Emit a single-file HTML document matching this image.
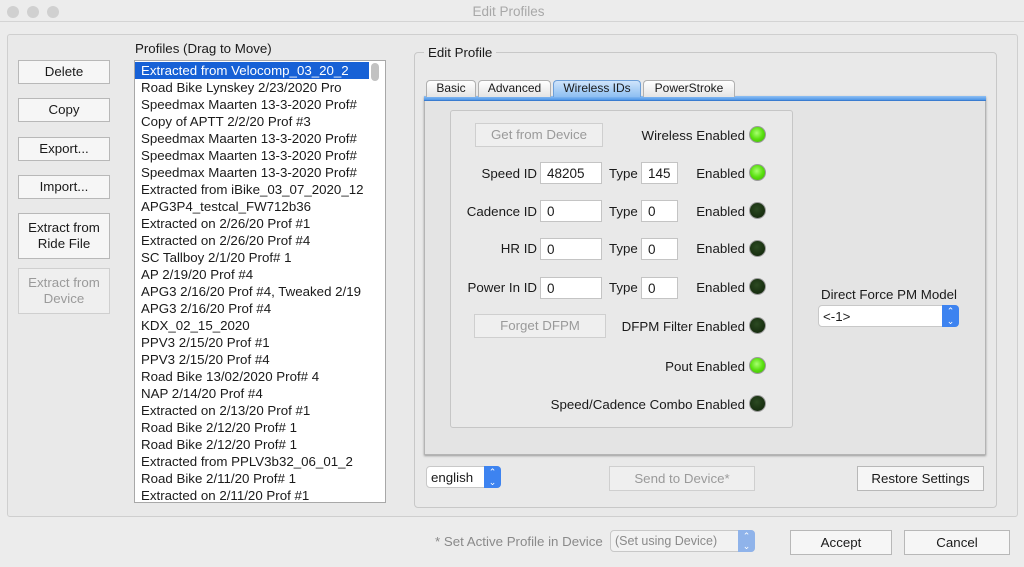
<!DOCTYPE html><html><head><style>
*{box-sizing:border-box;margin:0;padding:0}
body{width:1024px;height:567px;background:#ececec;font-family:"Liberation Sans",sans-serif;font-size:13.3px;color:#1a1a1a;position:relative;overflow:hidden}
.a{position:absolute}
.btn{position:absolute;background:#f6f6f6;border:1px solid #b8b8b8;text-align:center;font-size:13.3px;display:flex;align-items:center;justify-content:center;line-height:16px}
.dis{color:#9a9a9a;background:#efefef;border-color:#cfcfcf}
.t{position:absolute;white-space:nowrap}
.r{text-align:right}
.inp{position:absolute;background:#fff;border:1px solid #c4c4c4;height:22px;padding:3px 0 0 6px;font-size:13.5px}
.led{position:absolute;width:17px;height:17px;border-radius:50%;border:1px solid #9a9a9a}
.on{background:radial-gradient(circle at 45% 40%,#a8ff70,#5ae010 50%,#3cb000)}
.off{background:radial-gradient(circle at 45% 40%,#2c4a22,#1a3212 60%,#0f200a)}
.sel{position:absolute;background:#fff;border:1px solid #c8c8c8;border-radius:4px;height:22px;padding:3px 0 0 4px;font-size:13.3px}
.sel .ar{position:absolute;right:-1px;top:-1px;bottom:-1px;width:17px;background:#3d83f0;border-radius:0 4px 4px 0;color:#fff;font-size:9px;text-align:center;line-height:10px;padding-top:1px}
.li{height:17px;line-height:17px;padding-left:6px;white-space:nowrap;overflow:hidden;font-size:13.3px}
.tab{position:absolute;top:80px;height:17px;background:linear-gradient(#fff,#e4e4e4);border:1px solid #b0b0b0;border-bottom:none;border-radius:4px 4px 0 0;text-align:center;font-size:12px;line-height:15px}
</style></head><body>
<div class="a" style="left:0;top:0;width:1024px;height:22px;border-bottom:1px solid #d4d4d4;background:#ececec"></div>
<div class="a" style="left:7px;top:6px;width:12px;height:12px;border-radius:50%;background:#d0d0d0"></div>
<div class="a" style="left:27px;top:6px;width:12px;height:12px;border-radius:50%;background:#d0d0d0"></div>
<div class="a" style="left:47px;top:6px;width:12px;height:12px;border-radius:50%;background:#d0d0d0"></div>
<div class="t" style="left:0;width:1017px;text-align:center;top:4px;color:#a8a8a8;font-size:13.5px">Edit Profiles</div>

<div class="a" style="left:7px;top:34px;width:1011px;height:483px;border:1px solid #cfcfcf;border-radius:3px;background:#e9e9e9"></div>

<div class="btn" style="left:18px;top:60px;width:92px;height:24px">Delete</div>
<div class="btn" style="left:18px;top:98px;width:92px;height:24px">Copy</div>
<div class="btn" style="left:18px;top:137px;width:92px;height:24px">Export...</div>
<div class="btn" style="left:18px;top:175px;width:92px;height:24px">Import...</div>
<div class="btn" style="left:18px;top:213px;width:92px;height:46px">Extract from<br>Ride File</div>
<div class="btn dis" style="left:18px;top:268px;width:92px;height:46px">Extract from<br>Device</div>

<div class="t" style="left:135px;top:41px">Profiles (Drag to Move)</div>
<div class="a" style="left:134px;top:60px;width:252px;height:443px;background:#fff;border:1px solid #a8a8a8;padding-top:1px">
<div class="li" style="background:#1761d6;color:#fff;width:234px">Extracted from Velocomp_03_20_2</div>
<div class="li">Road Bike Lynskey 2/23/2020 Pro</div>
<div class="li">Speedmax Maarten 13-3-2020 Prof#</div>
<div class="li">Copy of APTT 2/2/20 Prof #3</div>
<div class="li">Speedmax Maarten 13-3-2020 Prof#</div>
<div class="li">Speedmax Maarten 13-3-2020 Prof#</div>
<div class="li">Speedmax Maarten 13-3-2020 Prof#</div>
<div class="li">Extracted from iBike_03_07_2020_12</div>
<div class="li">APG3P4_testcal_FW712b36</div>
<div class="li">Extracted on 2/26/20 Prof #1</div>
<div class="li">Extracted on 2/26/20 Prof #4</div>
<div class="li">SC Tallboy 2/1/20 Prof# 1</div>
<div class="li">AP 2/19/20 Prof #4</div>
<div class="li">APG3 2/16/20 Prof #4, Tweaked 2/19</div>
<div class="li">APG3 2/16/20 Prof #4</div>
<div class="li">KDX_02_15_2020</div>
<div class="li">PPV3 2/15/20 Prof #1</div>
<div class="li">PPV3 2/15/20 Prof #4</div>
<div class="li">Road Bike 13/02/2020 Prof# 4</div>
<div class="li">NAP 2/14/20 Prof #4</div>
<div class="li">Extracted on 2/13/20 Prof #1</div>
<div class="li">Road Bike 2/12/20 Prof# 1</div>
<div class="li">Road Bike 2/12/20 Prof# 1</div>
<div class="li">Extracted from PPLV3b32_06_01_2</div>
<div class="li">Road Bike 2/11/20 Prof# 1</div>
<div class="li">Extracted on 2/11/20 Prof #1</div>
<div class="a" style="left:236px;top:2px;width:8px;height:18px;border-radius:4px;background:#c2c2c2"></div>
</div>

<div class="a" style="left:414px;top:52px;width:583px;height:456px;border:1px solid #c8c8c8;border-radius:4px"></div>
<div class="t" style="left:424px;top:45px;background:#e9e9e9;padding:0 4px">Edit Profile</div>

<div class="a" style="left:424px;top:96px;width:562px;height:359px;background:#e4e4e4;border:1px solid #b4b4b4;box-shadow:0 1px 2px #999"></div>
<div class="a" style="left:424px;top:96px;width:562px;height:5px;background:linear-gradient(#8fc0f4,#4f96e6);border-bottom:1px solid #3a7cd0"></div>
<div class="tab" style="left:426px;width:50px">Basic</div>
<div class="tab" style="left:478px;width:73px">Advanced</div>
<div class="tab" style="left:553px;width:88px;background:linear-gradient(#cfe4fb,#8ebff2);border-color:#6d9fd8">Wireless IDs</div>
<div class="tab" style="left:643px;width:92px">PowerStroke</div>

<div class="a" style="left:450px;top:110px;width:343px;height:318px;border:1px solid #c6c6c6;border-radius:3px;background:#e9e9e9"></div>

<div class="btn dis" style="left:475px;top:123px;width:128px;height:24px">Get from Device</div>
<div class="t r" style="right:279px;top:128px">Wireless Enabled</div>
<div class="led on" style="left:749px;top:126px"></div>

<div class="t r" style="right:487px;top:166px">Speed ID</div>
<div class="inp" style="left:540px;top:162px;width:62px">48205</div>
<div class="t" style="left:609px;top:166px">Type</div>
<div class="inp" style="left:641px;top:162px;width:37px">145</div>
<div class="t r" style="right:279px;top:166px">Enabled</div>
<div class="led on" style="left:749px;top:164px"></div>

<div class="t r" style="right:487px;top:204px">Cadence ID</div>
<div class="inp" style="left:540px;top:200px;width:62px">0</div>
<div class="t" style="left:609px;top:204px">Type</div>
<div class="inp" style="left:641px;top:200px;width:37px">0</div>
<div class="t r" style="right:279px;top:204px">Enabled</div>
<div class="led off" style="left:749px;top:202px"></div>

<div class="t r" style="right:487px;top:241px">HR ID</div>
<div class="inp" style="left:540px;top:238px;width:62px">0</div>
<div class="t" style="left:609px;top:241px">Type</div>
<div class="inp" style="left:641px;top:238px;width:37px">0</div>
<div class="t r" style="right:279px;top:241px">Enabled</div>
<div class="led off" style="left:749px;top:240px"></div>

<div class="t r" style="right:487px;top:280px">Power In ID</div>
<div class="inp" style="left:540px;top:277px;width:62px">0</div>
<div class="t" style="left:609px;top:280px">Type</div>
<div class="inp" style="left:641px;top:277px;width:37px">0</div>
<div class="t r" style="right:279px;top:280px">Enabled</div>
<div class="led off" style="left:749px;top:278px"></div>

<div class="btn dis" style="left:474px;top:314px;width:132px;height:24px">Forget DFPM</div>
<div class="t r" style="right:279px;top:319px">DFPM Filter Enabled</div>
<div class="led off" style="left:749px;top:317px"></div>
<div class="t r" style="right:279px;top:359px">Pout Enabled</div>
<div class="led on" style="left:749px;top:357px"></div>
<div class="t r" style="right:279px;top:397px">Speed/Cadence Combo Enabled</div>
<div class="led off" style="left:749px;top:395px"></div>

<div class="t" style="left:821px;top:287px">Direct Force PM Model</div>
<div class="sel" style="left:818px;top:305px;width:141px">&lt;-1&gt;<div class="ar">&#8963;<br>&#8964;</div></div>

<div class="sel" style="left:426px;top:466px;width:75px">english<div class="ar">&#8963;<br>&#8964;</div></div>
<div class="btn dis" style="left:609px;top:466px;width:146px;height:25px">Send to Device*</div>
<div class="btn" style="left:857px;top:466px;width:127px;height:25px">Restore Settings</div>

<div class="t" style="left:435px;top:534px;color:#8a8a8a">* Set Active Profile in Device</div>
<div class="sel" style="left:610px;top:530px;width:145px;color:#8a8a8a;font-size:12.5px;background:#f2f2f2">(Set using Device)<div class="ar" style="background:#8fb3ea">&#8963;<br>&#8964;</div></div>
<div class="btn" style="left:790px;top:530px;width:102px;height:25px">Accept</div>
<div class="btn" style="left:904px;top:530px;width:106px;height:25px">Cancel</div>
</body></html>
